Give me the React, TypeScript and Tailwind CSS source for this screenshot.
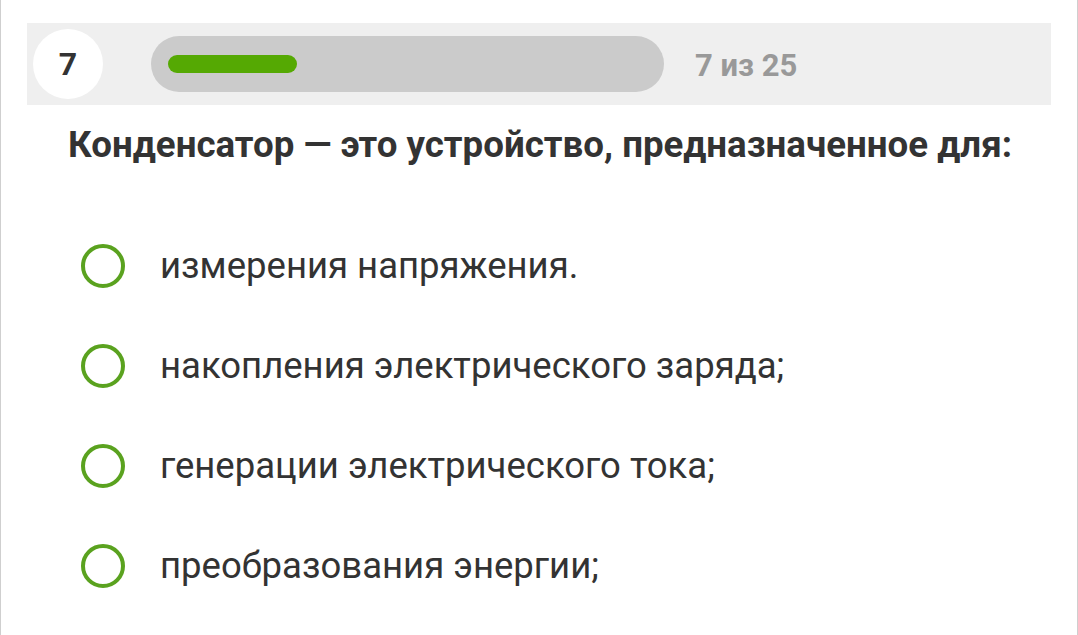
import React from 'react';

const options = [
  'измерения напряжения.',
  'накопления электрического заряда;',
  'генерации электрического тока;',
  'преобразования энергии;',
];

const App: React.FC = () => {
  const done = 7;
  const total = 25;

  return (
    <div
      className="h-[635px] w-[1078px] overflow-hidden border-x border-[#cfcfcf] bg-white"
      style={{ fontFamily: 'Roboto, "Noto Sans", sans-serif' }}
    >
      <div className="mx-[26px] mt-[23px] flex h-[82px] items-center bg-[#efefef] pl-[6px] pr-[28px]">
        <div className="flex h-[70px] w-[70px] items-center justify-center rounded-full bg-white text-[32px] font-bold text-[#333]">
          {done}
        </div>
        <div className="ml-[48px] flex h-[56px] w-[513px] items-center rounded-full bg-[#cbcbcb] px-[17px]">
          <div className="h-[18px] w-[129px] rounded-full bg-[#55a903]" />
        </div>
        <div className="ml-[31px] pt-[4px] text-[31px] font-bold text-[#999]">
          {done} из {total}
        </div>
      </div>

      <h1 className="mt-[16px] pl-[67px] text-[36.7px] font-bold leading-[48px] text-[#333]">
        Конденсатор — это устройство, предназначенное для:
      </h1>

      <div className="mt-[75px] flex flex-col gap-[56px] pl-[80px]">
        {options.map((o) => (
          <label key={o} className="flex h-[44px] items-center">
            <span className="h-[44px] w-[44px] shrink-0 rounded-full border-[4px] border-[#5aa21f]" />
            <span className="ml-[35px] text-[36.5px] text-[#333]">{o}</span>
          </label>
        ))}
      </div>
    </div>
  );
};

export default App;
